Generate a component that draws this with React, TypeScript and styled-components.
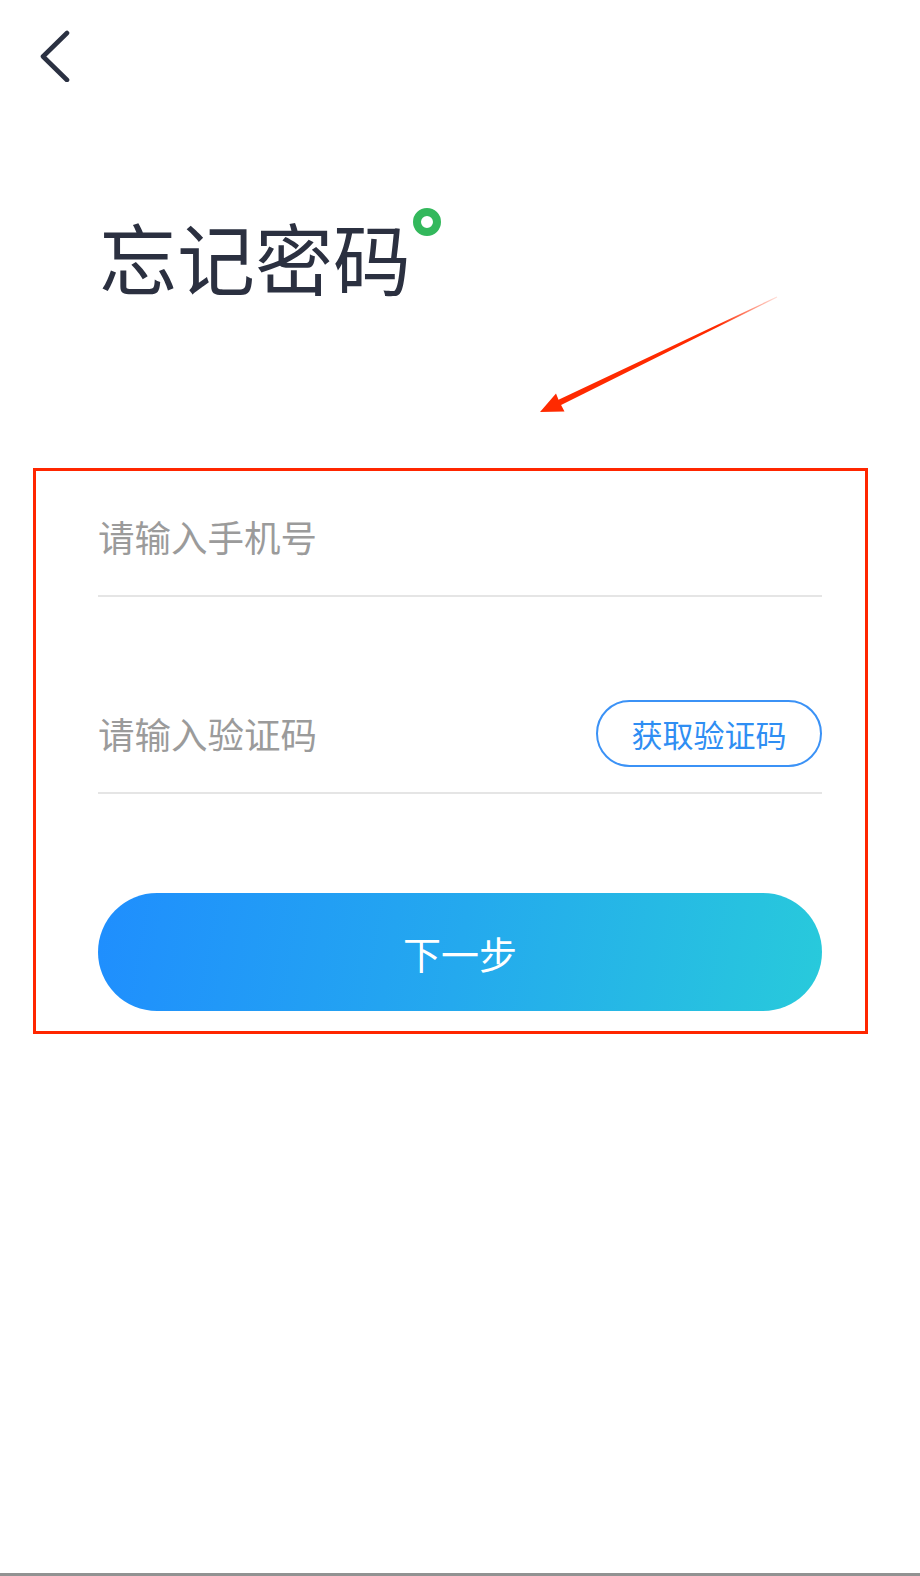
import styled, { createGlobalStyle } from "styled-components";

const GlobalStyle = createGlobalStyle`
  html, body {
    margin: 0;
    padding: 0;
    background: #ffffff;
  }
  body {
    font-family: "Noto Sans CJK SC", "Noto Sans", sans-serif;
  }
  * {
    box-sizing: border-box;
  }
`;

const App = () => {
  return (
    <>
      <GlobalStyle />
      <Page>
        <TopBar>
          <BackButton aria-label="返回">
            <svg width="34" height="52" viewBox="0 0 34 52">
              <polyline
                points="29,3 5,26.5 29,50"
                fill="none"
                stroke="#2b3142"
                strokeWidth="4.6"
                strokeLinecap="round"
                strokeLinejoin="round"
              />
            </svg>
          </BackButton>
        </TopBar>

        <TitleRow>
          <Title>忘记密码</Title>
          <Dot />
        </TitleRow>

        <Frame>
          <Field>
            <Input placeholder="请输入手机号" />
          </Field>
          <Field $top={80}>
            <Input placeholder="请输入验证码" />
            <CodeButton>获取验证码</CodeButton>
          </Field>
          <NextButton>下一步</NextButton>
        </Frame>

        <Pointer width="260" height="135" viewBox="530 285 260 135">
          <defs>
            <linearGradient id="fade" x1="777" y1="297" x2="540" y2="412" gradientUnits="userSpaceOnUse">
              <stop offset="0" stopColor="#ff2a00" stopOpacity="0.15" />
              <stop offset="0.25" stopColor="#ff2a00" stopOpacity="1" />
              <stop offset="1" stopColor="#ff2a00" stopOpacity="1" />
            </linearGradient>
          </defs>
          <polygon
            points="777.2,297.4 561.1,405.1 564.5,411.5 540,412 556,393.5 558.5,399.7 776.8,296.6"
            fill="url(#fade)"
          />
        </Pointer>
      </Page>
    </>
  );
};

export default App;

const Page = styled.div`
  position: relative;
  width: 920px;
  min-height: 1576px;
  background: #ffffff;
  border-bottom: 3px solid #929292;
`;

const TopBar = styled.div`
  display: flex;
  align-items: center;
  padding: 30px 0 0 38px;
  height: 82px;
`;

const BackButton = styled.div`
  display: flex;
  width: 34px;
  height: 52px;
  cursor: pointer;
`;

const TitleRow = styled.div`
  display: flex;
  align-items: flex-start;
  margin-top: 135px;
  padding-left: 99px;
`;

const Title = styled.h1`
  margin: 0;
  font-size: 78px;
  line-height: 78px;
  font-weight: 400;
  color: #2b3040;
`;

const Dot = styled.span`
  width: 28px;
  height: 28px;
  margin: -9px 0 0 2px;
  border-radius: 50%;
  border: 8px solid #33b85c;
  flex-shrink: 0;
`;

const Frame = styled.div`
  margin: 173px 52px 0 33px;
  border: 3px solid #ff2600;
  padding: 9px 43px 20px 62px;
  display: flex;
  flex-direction: column;
`;

const Field = styled.div<{ $top?: number }>`
  display: flex;
  align-items: center;
  height: 117px;
  margin-top: ${(p) => p.$top ?? 0}px;
  border-bottom: 2px solid #e5e5e5;
  padding-bottom: 2px;
`;

const Input = styled.input`
  flex: 1;
  min-width: 0;
  border: none;
  outline: none;
  background: transparent;
  padding: 0;
  font-family: inherit;
  font-size: 36.5px;
  line-height: 50px;
  color: #333333;

  &::placeholder {
    color: #9b9b9b;
  }
`;

const CodeButton = styled.div`
  flex-shrink: 0;
  width: 226px;
  height: 67px;
  display: flex;
  align-items: center;
  justify-content: center;
  border: 2px solid #3b92f6;
  border-radius: 34px;
  color: #2f8ef3;
  font-size: 31px;
  cursor: pointer;
`;

const NextButton = styled.div`
  margin-top: 99px;
  height: 118px;
  border-radius: 59px;
  display: flex;
  align-items: center;
  justify-content: center;
  background: linear-gradient(100deg, #1f8efe 0%, #24a9ee 50%, #28cadb 100%);
  color: #ffffff;
  font-size: 38px;
  cursor: pointer;
`;

const Pointer = styled.svg`
  position: absolute;
  left: 530px;
  top: 285px;
  pointer-events: none;
`;
